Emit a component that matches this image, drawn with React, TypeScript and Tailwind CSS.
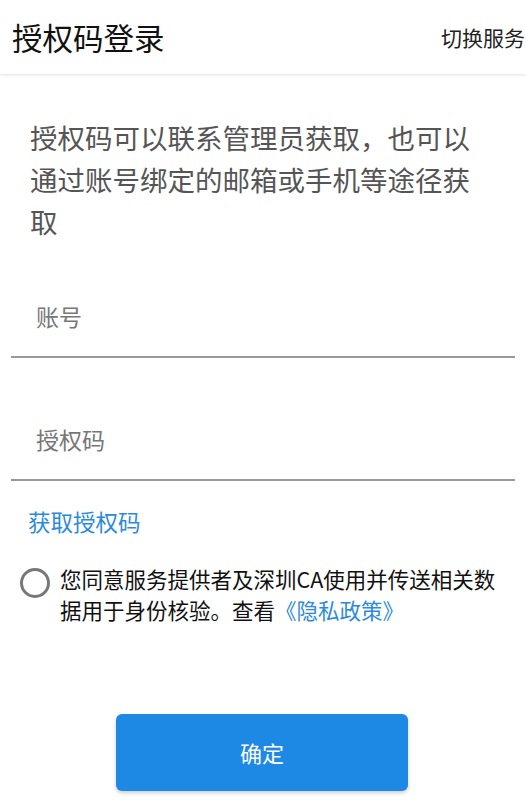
import React from "react";

export default function App() {
  return (
    <div
      className="w-[526px] h-[801px] bg-white overflow-hidden flex flex-col"
      style={{ fontFamily: '"Noto Sans CJK SC", "Noto Sans", sans-serif' }}
    >
      <header className="h-[74px] shrink-0 flex items-center justify-between pl-[12px] pr-[1px] bg-white shadow-[0_1px_3px_rgba(0,0,0,0.12)] relative z-10">
        <h1 className="text-[30.5px] leading-none text-[#111] font-normal">授权码登录</h1>
        <span className="text-[21px] leading-none text-[#222]">切换服务</span>
      </header>

      <main className="flex flex-col shrink-0">
        <p className="mt-[42px] pl-[30px] pr-[46px] text-[27.5px] leading-[42px] text-[#555]">
          授权码可以联系管理员获取，也可以通过账号绑定的邮箱或手机等途径获取
        </p>

        <div className="mt-[35px] mx-[11px] h-[81px] border-b-2 border-[#999] flex items-center pl-[25px]">
          <span className="text-[23px] text-[#777]">账号</span>
        </div>
        <div className="mt-[42px] mx-[11px] h-[81px] border-b-2 border-[#999] flex items-center pl-[25px]">
          <span className="text-[23px] text-[#777]">授权码</span>
        </div>

        <div className="mt-[24px] pl-[28px] text-[22.5px] leading-[32px] text-[#2b8ae0]">获取授权码</div>

        <div className="mt-[26px] flex items-start pl-[20px] pr-[16px]">
          <div className="mt-[5px] w-[30px] h-[30px] rounded-full border-[3px] border-[#777] shrink-0" />
          <p className="ml-[10px] text-[21.5px] leading-[31px] text-[#111]">
            您同意服务提供者及深圳CA使用并传送相关数据用于身份核验。查看<span className="text-[#2b8ae0]">《隐私政策》</span>
          </p>
        </div>

        <div className="mt-[89px] flex justify-center">
          <button className="w-[292px] h-[77px] ml-[-2px] rounded-[6px] bg-[#1e88e5] text-white text-[22px] shadow-[0_2px_4px_rgba(0,0,0,0.2)]">
            确定
          </button>
        </div>
      </main>
    </div>
  );
}
